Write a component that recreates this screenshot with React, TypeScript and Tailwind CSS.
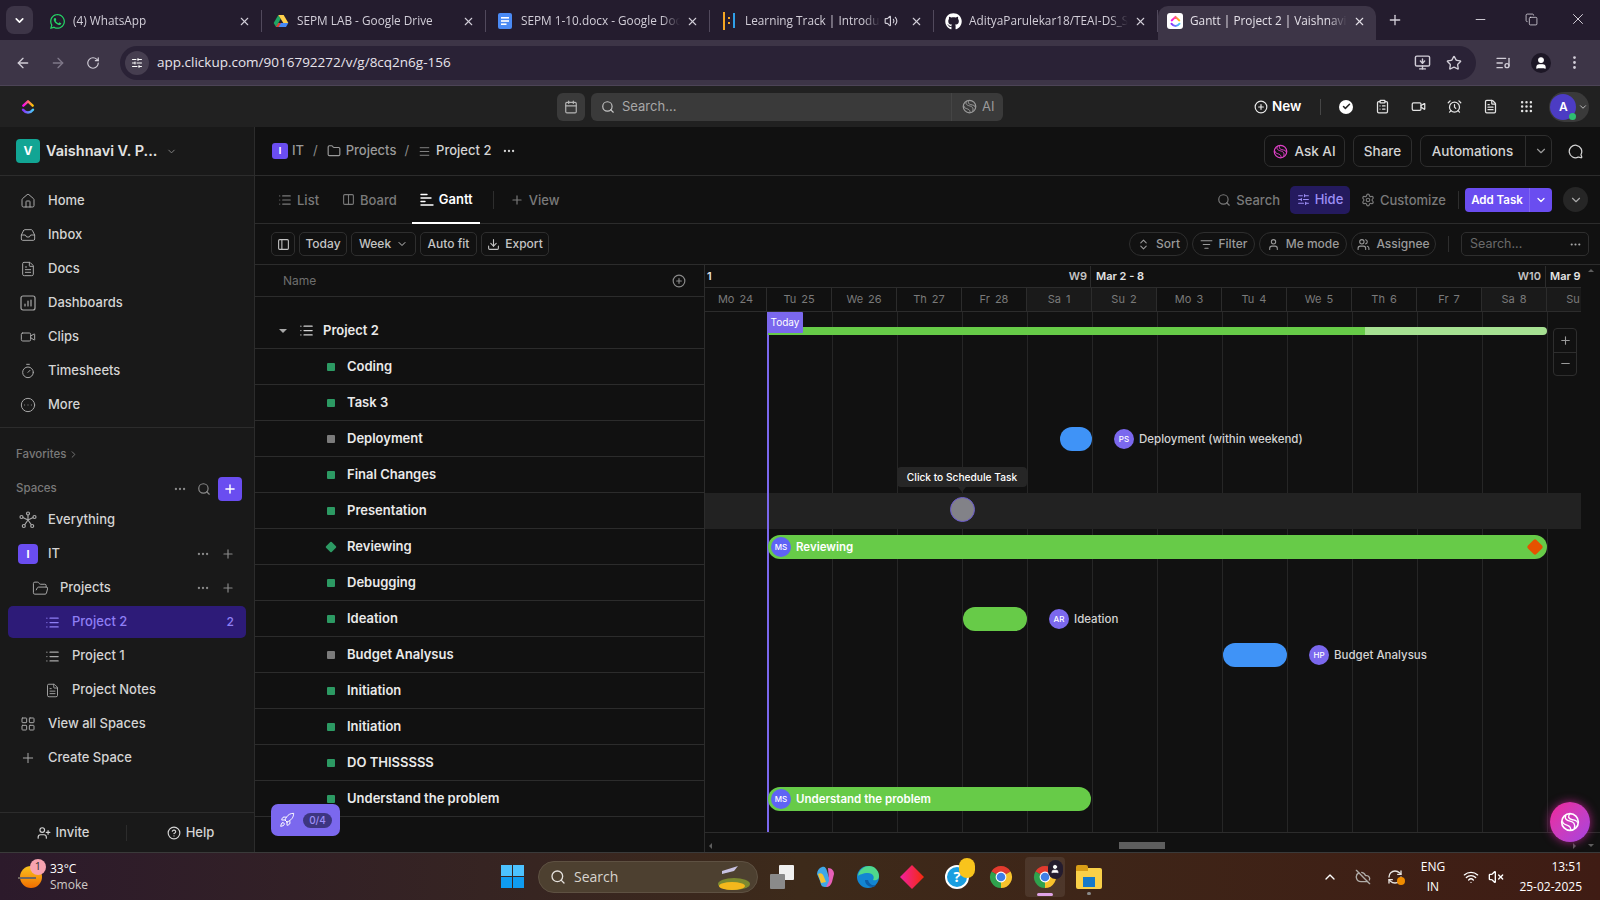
import React from 'react';
import {
  AlarmClock, ArrowLeft, ArrowRight, ChevronDown, ChevronRight, ChevronUp, ChevronsUpDown, CirclePlus, CircleEllipsis,
  CircleHelp, Check, Columns2, Copy, Download, Ellipsis, EllipsisVertical, FileText, Folder, FolderOpen, Calendar, House, Inbox,
  LayoutGrid, List, ListFilter, ListMusic, Grip, Menu, Minus, MonitorDown, Plus, RefreshCw, Rocket, RotateCw, Search, Settings, SlidersHorizontal,
  Star, Timer, User, UserPlus, Users, Video, Volume2, VolumeX, Wifi, X, CloudOff, MessageCircle, PanelLeft, ClipboardList
} from 'lucide-react';
import { FaGithub, FaWhatsapp } from 'react-icons/fa';

const ClickUpLogo = ({ size = 16 }: { size?: number }) => (
  <svg width={size} height={size} viewBox="0 0 24 24" fill="none">
    <defs>
      <linearGradient id="cu1" x1="0" y1="0" x2="1" y2="0"><stop offset="0" stopColor="#ff02f0" /><stop offset="1" stopColor="#ffc800" /></linearGradient>
      <linearGradient id="cu2" x1="0" y1="0" x2="1" y2="0"><stop offset="0" stopColor="#8930fd" /><stop offset="1" stopColor="#49ccf9" /></linearGradient>
    </defs>
    <path d="M5 10 12 3.500 19 10" stroke="url(#cu1)" strokeWidth="3.600" strokeLinecap="round" strokeLinejoin="round" />
    <path d="M4.500 16c4.500 5.800 10.500 5.800 15 0" stroke="url(#cu2)" strokeWidth="3.600" strokeLinecap="round" />
  </svg>
);

const DriveIcon = () => (
  <svg width="16" height="16" viewBox="0 0 24 24">
    <path d="M8 3 1 15l3.500 6 7-12z" fill="#1fa463" />
    <path d="M8 3h8l7 12h-7.500z" fill="#ffd04b" />
    <path d="M4.500 21h15l3.500-6H8z" fill="#4688f4" />
    <path d="M4.500 21 8 15h4l-3.500 6z" fill="#d9452f" />
  </svg>
);

const DocsIcon = () => (
  <svg width="16" height="16" viewBox="0 0 16 16">
    <rect x="1" y="0" width="14" height="16" rx="2" fill="#4a8af4" />
    <rect x="4" y="4" width="8" height="1.600" fill="#fff" />
    <rect x="4" y="7.200" width="8" height="1.600" fill="#fff" />
    <rect x="4" y="10.400" width="5.500" height="1.600" fill="#fff" />
  </svg>
);

const TrackIcon = () => (
  <svg width="12" height="18" viewBox="0 0 12 18">
    <rect x="0" y="0" width="2" height="18" fill="#f5a623" />
    <rect x="5" y="5" width="2" height="2" fill="#f5a623" />
    <rect x="5" y="10" width="2" height="2" fill="#f5a623" />
    <rect x="10" y="1" width="2" height="15" fill="#2f9fe8" />
  </svg>
);

const ChromeIcon = ({ size = 24 }: { size?: number }) => (
  <svg width={size} height={size} viewBox="0 0 24 24">
    <path d="M12 12 2.470 6.500A11 11 0 0 1 21.530 6.500Z" fill="#e33b2e" />
    <path d="M12 12 21.530 6.500A11 11 0 0 1 12 23Z" fill="#f8c22c" />
    <path d="M12 12 12 23A11 11 0 0 1 2.470 6.500Z" fill="#2fa24d" />
    <circle cx="12" cy="12" r="5.400" fill="#fff" />
    <circle cx="12" cy="12" r="4.300" fill="#3f7fe6" />
  </svg>
);

const AiSwirl = ({ size = 16, color = '#9a9a9a' }: { size?: number; color?: string }) => (
  <svg width={size} height={size} viewBox="0 0 24 24" fill="none" stroke={color} strokeWidth="2">
    <circle cx="12" cy="12" r="10" />
    <path d="M7 4c-2 4 1 6 5 7s7 3 5 9M12 2c-3 3-2 6 2 7s7 1 7 4M3 11c0 3 3 4 6 5s4 3 4 6" strokeWidth="1.600" />
  </svg>
);

const GanttGlyph = ({ color = '#fff' }: { color?: string }) => (
  <svg width="14" height="14" viewBox="0 0 14 14" stroke={color} strokeWidth="1.400" strokeLinecap="round">
    <path d="M1 2.500h6M1 6h10M1 9.500h4M1 13h12" />
  </svg>
);

const EverythingIcon = () => (
  <svg width="18" height="18" viewBox="0 0 18 18" fill="none" stroke="#a8a8a8" strokeWidth="1.200">
    <path d="M9 9V3.500M9 9 3.800 6.500M9 9l5.200-2.500M9 9l-3.500 5M9 9l3.500 5" />
    <circle cx="9" cy="2.500" r="1.500" /><circle cx="2.500" cy="6" r="1.500" /><circle cx="15.500" cy="6" r="1.500" />
    <circle cx="4.800" cy="15" r="1.500" /><circle cx="13.200" cy="15" r="1.500" />
  </svg>
);

const BoxedChart = ({ size = 16, className = '' }: { size?: number; strokeWidth?: number; className?: string }) => (
  <svg width={size} height={size} viewBox="0 0 16 16" fill="none" stroke="currentColor" strokeWidth="1.200" strokeLinecap="round" className={className}>
    <rect x="1" y="1" width="14" height="14" rx="2" />
    <path d="M5 11V9M8 11V6M11 11V5" />
  </svg>
);

const tabs = [
  { title: '(4) WhatsApp', icon: <FaWhatsapp className="text-[#25d366]" size={17} /> },
  { title: 'SEPM LAB - Google Drive', icon: <DriveIcon /> },
  { title: 'SEPM 1-10.docx - Google Docs', icon: <DocsIcon /> },
  { title: 'Learning Track | Introduction', icon: <TrackIcon />, audio: true },
  { title: 'AdityaParulekar18/TEAI-DS_SEPM', icon: <FaGithub className="text-white" size={17} /> },
];

const sideNav: [string, React.ElementType][] = [
  ['Home', House],
  ['Inbox', Inbox],
  ['Docs', FileText],
  ['Dashboards', BoxedChart],
  ['Clips', Video],
  ['Timesheets', Timer],
  ['More', CircleEllipsis],
];

const tasks = [
  { name: 'Coding', color: 'bg-[#2c9a63]' },
  { name: 'Task 3', color: 'bg-[#2c9a63]' },
  { name: 'Deployment', color: 'bg-[#7b7b7b]' },
  { name: 'Final Changes', color: 'bg-[#2c9a63]' },
  { name: 'Presentation', color: 'bg-[#2c9a63]' },
  { name: 'Reviewing', color: 'bg-[#2c9a63]', diamond: true },
  { name: 'Debugging', color: 'bg-[#2c9a63]' },
  { name: 'Ideation', color: 'bg-[#2c9a63]' },
  { name: 'Budget Analysus', color: 'bg-[#7b7b7b]' },
  { name: 'Initiation', color: 'bg-[#2c9a63]' },
  { name: 'Initiation', color: 'bg-[#2c9a63]' },
  { name: 'DO THISSSSS', color: 'bg-[#2c9a63]' },
  { name: 'Understand the problem', color: 'bg-[#2c9a63]' },
];

const days = [
  { l: 'Mo', n: '24', w: 'w-[62px]' },
  { l: 'Tu', n: '25' }, { l: 'We', n: '26' }, { l: 'Th', n: '27' }, { l: 'Fr', n: '28' },
  { l: 'Sa', n: '1', end: true }, { l: 'Su', n: '2', end: true }, { l: 'Mo', n: '3' }, { l: 'Tu', n: '4' },
  { l: 'We', n: '5' }, { l: 'Th', n: '6' }, { l: 'Fr', n: '7' }, { l: 'Sa', n: '8', end: true }, { l: 'Su', n: '9', end: true },
];

const ToolBtn = ({ children, className = '' }: { children: React.ReactNode; className?: string }) => (
  <div className={`h-[24px] flex items-center justify-center gap-[5px] border border-[#2e2e2e] rounded-[5px] text-[12px] font-medium text-[#c4c4c4] ${className}`}>{children}</div>
);

const PillBtn = ({ children, className = '' }: { children: React.ReactNode; className?: string }) => (
  <div className={`h-[24px] flex items-center justify-center gap-[6px] border border-[#2e2e2e] rounded-full text-[12px] font-medium text-[#9a9a9a] ${className}`}>{children}</div>
);

const HeadBtn = ({ children, className = '' }: { children: React.ReactNode; className?: string }) => (
  <div className={`h-[32px] flex items-center justify-center gap-[6px] border border-[#2e2e2e] rounded-[7px] text-[13.500px] font-medium text-[#d4d4d4] ${className}`}>{children}</div>
);

const Avatar = ({ text, color = 'bg-[#7b68ee]' }: { text: string; color?: string }) => (
  <div className={`w-[20px] h-[20px] rounded-full ${color} text-white text-[8px] font-medium flex items-center justify-center shrink-0`}>{text}</div>
);

const BarLabel = ({ left, top, text, label }: { left: number; top: number; text: string; label: string }) => (
  <div className="absolute flex items-center gap-[5px]" style={{ left, top }}>
    <Avatar text={text} />
    <span className="mt-[2px] text-[11.500px] font-medium text-[#d4d4d4] whitespace-nowrap">{label}</span>
  </div>
);

const App = () => {
  const colLines = [62, 127, 192, 257, 322, 387, 452, 517, 582, 647, 712, 777, 842];
  return (
    <div className="w-[1600px] h-[900px] flex flex-col overflow-hidden bg-[#111111] text-white font-['Inter',sans-serif]">
      {/* browser tabs */}
      <div className="h-[40px] shrink-0 bg-[#241c2e] flex items-end pl-[6px] font-['Open_Sans',sans-serif]">
        <div className="w-[27px] h-[28px] mb-[6px] rounded-[8px] bg-[#3d3547] flex items-center justify-center"><ChevronDown size={13} strokeWidth={3} /></div>
        <div className="flex ml-[5px] h-[34px]">
          {tabs.map((t) => (
            <div key={t.title} className="w-[224px] h-[34px] flex items-center pl-[9px] pr-[10px] pb-[4px] border-r border-[#51495c] [border-image:linear-gradient(transparent_15%,#51495c_15%,#51495c_75%,transparent_75%)_1]">
              <div className="w-[20px] flex justify-center shrink-0">{t.icon}</div>
              <span className="ml-[6px] text-[11.800px] text-[#d2ced8] whitespace-nowrap overflow-hidden flex-1 [mask-image:linear-gradient(to_right,black_88%,transparent)]">{t.title}</span>
              {t.audio && <Volume2 size={14} className="text-[#d2ced8] ml-[4px] mr-[6px] shrink-0" />}
              <X size={13} className="text-[#d2ced8] shrink-0 ml-[6px]" />
            </div>
          ))}
          <div className="w-[218px] h-[34px] bg-[#3d3547] rounded-t-[10px] flex items-center pl-[9px] pr-[10px] pb-[4px]">
            <div className="w-[16px] h-[16px] rounded-[3px] bg-white flex items-center justify-center"><ClickUpLogo size={13} /></div>
            <span className="ml-[7px] text-[11.800px] text-[#e4e0e8] whitespace-nowrap overflow-hidden flex-1 [mask-image:linear-gradient(to_right,black_88%,transparent)]">Gantt | Project 2 | Vaishnavi V. Parulekar</span>
            <X size={13} className="text-[#e4e0e8] shrink-0 ml-[6px]" />
          </div>
        </div>
        <Plus size={16} className="mb-[12px] ml-[11px] text-[#d2ced8]" />
        <div className="ml-auto flex items-center mb-[12px] text-[#e4e0e8]">
          <Minus size={15} strokeWidth={1.400} className="mr-[37px]" />
          <Copy size={13} strokeWidth={1.400} className="mr-[31px]" />
          <X size={18} strokeWidth={1.200} className="mr-[13px]" />
        </div>
      </div>
      {/* address bar */}
      <div className="h-[46px] shrink-0 bg-[#3d3547] flex items-center pl-[15px] border-b border-[#4c4456] font-['Open_Sans',sans-serif]">
        <ArrowLeft size={16} className="text-[#d2ced8]" />
        <ArrowRight size={16} className="text-[#7f7889] ml-[19px]" />
        <RotateCw size={14} className="text-[#d2ced8] ml-[20px]" />
        <div className="ml-[20px] w-[1356px] h-[34px] rounded-full bg-[#2a2236] flex items-center pl-[5px] pr-[14px]">
          <div className="w-[24px] h-[24px] rounded-full bg-[#463e50] flex items-center justify-center"><SlidersHorizontal size={12} /></div>
          <span className="ml-[8px] text-[13.500px] text-[#e8e4ec]">app.clickup.com/9016792272/v/g/8cq2n6g-156</span>
          <MonitorDown size={17} className="ml-auto text-[#d2ced8]" />
          <Star size={16} className="ml-[15px] text-[#d2ced8]" />
        </div>
        <ListMusic size={16} className="ml-[19px] text-[#d2ced8]" />
        <div className="ml-[20px] w-[20px] h-[20px] rounded-full bg-[#1d1726] flex items-center justify-center"><User size={14} fill="#fff" /></div>
        <EllipsisVertical size={17} className="ml-[15px] text-[#d2ced8]" />
      </div>
      {/* clickup top bar */}
      <div className="h-[41px] shrink-0 bg-[#212121] flex items-center pl-[20px] pr-[10px]">
        <ClickUpLogo />
        <div className="ml-[521px] w-[28px] h-[28px] rounded-[6px] bg-[#3a3a3a] flex items-center justify-center"><Calendar size={14} className="text-[#b5b5b5]" /></div>
        <div className="ml-[6px] w-[412px] h-[28px] rounded-[6px] bg-[#3a3a3a] flex items-center pl-[10px]">
          <Search size={14} className="text-[#c4c4c4]" />
          <span className="ml-[7px] text-[13px] text-[#a8a8a8]">Search...</span>
          <div className="ml-auto w-[52px] h-full border-l border-[#454545] flex items-center pl-[10px] gap-[5px] text-[13px] text-[#9a9a9a]"><AiSwirl size={15} />AI</div>
        </div>
        <CirclePlus size={14} className="ml-[251px] text-[#eaeaea]" />
        <span className="ml-[4px] text-[13.500px] font-semibold">New</span>
        <div className="ml-[19px] w-px h-[16px] bg-[#464646]" />
        <div className="ml-[18px] w-[14px] h-[14px] rounded-full bg-white flex items-center justify-center"><Check size={9} strokeWidth={4} className="text-[#222]" /></div>
        <ClipboardList size={15} className="ml-[22px] text-[#e4e4e4]" />
        <Video size={15} className="ml-[21px] text-[#e4e4e4]" />
        <AlarmClock size={15} className="ml-[21px] text-[#e4e4e4]" />
        <FileText size={15} className="ml-[21px] text-[#e4e4e4]" />
        <Grip size={15} className="ml-[21px] text-[#e4e4e4]" />
        <div className="ml-[15px] w-[40px] h-[30px] rounded-full bg-[#3a3a3a] flex items-center pl-[1px]">
          <div className="relative w-[26px] h-[26px] rounded-full bg-[#4c3cc4] flex items-center justify-center text-[12px] font-semibold">
            A<span className="absolute right-0 bottom-0 w-[7px] h-[7px] rounded-full bg-[#2fbf71]" />
          </div>
          <ChevronDown size={10} className="ml-[2px] text-[#d4d4d4]" />
        </div>
      </div>
      <div className="flex-1 flex min-h-0">
        {/* sidebar */}
        <div className="w-[255px] shrink-0 bg-[#191919] border-r border-[#2c2c2c] flex flex-col">
          <div className="h-[49px] shrink-0 border-b border-[#2c2c2c] flex items-center pl-[16px]">
            <div className="w-[24px] h-[24px] rounded-[4px] bg-[#12a594] flex items-center justify-center text-[12px] font-bold">V</div>
            <span className="ml-[6px] text-[14.500px] font-semibold text-[#e2e2e2]">Vaishnavi V. P...</span>
            <ChevronDown size={11} className="ml-[9px] text-[#8a8a8a]" />
          </div>
          <div className="h-[252px] shrink-0 border-b border-[#2c2c2c] pt-[8px]">
            {sideNav.map(([label, Icon]) => (
              <div key={label} className="h-[34px] flex items-center pl-[20px]">
                <Icon size={16} strokeWidth={1.500} className="text-[#a8a8a8]" />
                <span className="ml-[12px] text-[13px] font-medium text-[#d4d4d4]">{label}</span>
              </div>
            ))}
          </div>
          <div className="h-[25px] mt-[14px] flex items-center pl-[16px] text-[11.500px] font-medium text-[#7a7a7a]">
            Favorites <ChevronRight size={11} className="ml-[2px]" />
          </div>
          <div className="h-[26px] mt-[9px] flex items-center pl-[16px] pr-[12px] text-[11.500px] font-medium text-[#7a7a7a]">
            Spaces
            <Ellipsis size={14} className="ml-auto text-[#8a8a8a]" />
            <Search size={14} className="ml-[10px] text-[#8a8a8a]" />
            <div className="ml-[7px] w-[24px] h-[24px] rounded-[4px] bg-[#6a4df0] flex items-center justify-center"><Plus size={14} strokeWidth={2.500} className="text-white" /></div>
          </div>
          <div className="h-[34px] mt-[1px] flex items-center pl-[19px]">
            <EverythingIcon />
            <span className="ml-[11px] text-[13px] font-medium text-[#d4d4d4]">Everything</span>
          </div>
          <div className="h-[34px] flex items-center pl-[18px] pr-[19px]">
            <div className="w-[20px] h-[20px] rounded-[4px] bg-[#6a4df0] flex items-center justify-center text-[11px] font-bold">I</div>
            <span className="ml-[10px] text-[13px] font-medium text-[#d4d4d4]">IT</span>
            <Ellipsis size={14} className="ml-auto text-[#8a8a8a]" />
            <Plus size={14} className="ml-[11px] text-[#8a8a8a]" />
          </div>
          <div className="h-[34px] flex items-center pl-[32px] pr-[19px]">
            <FolderOpen size={17} strokeWidth={1.400} className="text-[#a8a8a8]" />
            <span className="ml-[11px] text-[13px] font-medium text-[#d4d4d4]">Projects</span>
            <Ellipsis size={14} className="ml-auto text-[#8a8a8a]" />
            <Plus size={14} className="ml-[11px] text-[#8a8a8a]" />
          </div>
          <div className="h-[32px] mx-[8px] my-px rounded-[5px] bg-[#2d1b78] flex items-center pl-[37px] pr-[12px] text-[#8f7ff5]">
            <List size={15} />
            <span className="ml-[12px] text-[13px] font-medium">Project 2</span>
            <span className="ml-auto text-[12px] font-medium">2</span>
          </div>
          <div className="h-[34px] flex items-center pl-[45px]">
            <List size={15} className="text-[#a8a8a8]" />
            <span className="ml-[12px] text-[13px] font-medium text-[#d4d4d4]">Project 1</span>
          </div>
          <div className="h-[34px] flex items-center pl-[45px]">
            <FileText size={15} strokeWidth={1.500} className="text-[#a8a8a8]" />
            <span className="ml-[12px] text-[13px] font-medium text-[#d4d4d4]">Project Notes</span>
          </div>
          <div className="h-[34px] flex items-center pl-[20px]">
            <LayoutGrid size={16} strokeWidth={1.500} className="text-[#a8a8a8]" />
            <span className="ml-[12px] text-[13px] font-medium text-[#d4d4d4]">View all Spaces</span>
          </div>
          <div className="h-[34px] flex items-center pl-[20px]">
            <Plus size={16} strokeWidth={1.500} className="text-[#a8a8a8]" />
            <span className="ml-[12px] text-[13px] font-medium text-[#d4d4d4]">Create Space</span>
          </div>
          <div className="mt-auto h-[40px] border-t border-[#2c2c2c] flex items-center text-[13px] font-medium text-[#d4d4d4]">
            <div className="w-[127px] flex items-center justify-center gap-[5px] border-r border-[#2c2c2c] h-[16px]"><UserPlus size={14} />Invite</div>
            <div className="flex-1 flex items-center justify-center gap-[5px]"><CircleHelp size={14} />Help</div>
          </div>
        </div>
        {/* main */}
        <div className="flex-1 flex flex-col min-w-0">
          <div className="h-[49px] shrink-0 border-b border-[#2c2c2c] flex items-center pl-[17px] pr-[17px] text-[13px]">
            <div className="w-[16px] h-[16px] rounded-[3px] bg-[#6a4df0] flex items-center justify-center text-[9px] font-bold">I</div>
            <span className="ml-[4px] text-[#9a9a9a] font-medium">IT</span>
            <span className="ml-[9px] text-[#8a8a8a]">/</span>
            <Folder size={14} className="ml-[9px] text-[#9a9a9a]" />
            <span className="ml-[5px] text-[#9a9a9a] font-medium">Projects</span>
            <span className="ml-[8px] text-[#8a8a8a]">/</span>
            <Menu size={13} strokeWidth={1.500} className="ml-[9px] text-[#9a9a9a]" />
            <span className="ml-[5px] text-[#d4d4d4] font-medium">Project 2</span>
            <Ellipsis size={14} className="ml-[11px] text-[#d4d4d4]" />
            <HeadBtn className="ml-auto w-[81px]"><AiSwirl size={15} color="#e040c8" />Ask AI</HeadBtn>
            <HeadBtn className="ml-[8px] w-[59px]">Share</HeadBtn>
            <HeadBtn className="ml-[8px] w-[132px] !gap-0">
              <span className="w-[101px] pr-[4px] text-center border-r border-[#2e2e2e] leading-[30px]">Automations</span>
              <ChevronDown size={14} className="ml-[8px] text-[#9a9a9a]" />
            </HeadBtn>
            <MessageCircle size={15} className="ml-[16px] text-[#d4d4d4] -scale-x-100" />
          </div>
          <div className="h-[48px] shrink-0 border-b border-[#2c2c2c] flex items-center pl-[23px] pr-[12px] text-[13px] font-medium">
            <List size={14} className="text-[#7a7a7a]" />
            <span className="ml-[5px] mt-[2px] text-[#7a7a7a]">List</span>
            <Columns2 size={13} className="ml-[23px] text-[#7a7a7a]" />
            <span className="ml-[5px] mt-[2px] text-[#7a7a7a]">Board</span>
            <div className="ml-[15px] w-[68px] h-[48px] border-b-2 border-white flex items-center pl-[8px]">
              <GanttGlyph />
              <span className="ml-[5px] mt-[2px] text-white font-semibold">Gantt</span>
            </div>
            <div className="ml-[13px] w-px h-[18px] bg-[#2e2e2e]" />
            <Plus size={14} className="ml-[16px] text-[#7a7a7a]" />
            <span className="ml-[5px] mt-[2px] text-[#7a7a7a]">View</span>
            <Search size={14} className="ml-auto text-[#7a7a7a]" />
            <span className="ml-[5px] mt-[2px] text-[#7a7a7a]">Search</span>
            <div className="ml-[10px] w-[60px] h-[28px] rounded-[5px] bg-[#241a5e] text-[#9d8ff7] flex items-center justify-center gap-[5px]">
              <SlidersHorizontal size={13} />Hide
            </div>
            <Settings size={14} className="ml-[11px] text-[#7a7a7a]" />
            <span className="ml-[5px] mt-[2px] text-[#7a7a7a]">Customize</span>
            <div className="ml-[12px] w-px h-[18px] bg-[#2e2e2e]" />
            <div className="ml-[6px] w-[87px] h-[24px] rounded-[4px] bg-[#6a4df0] flex items-center text-[11.500px] font-semibold">
              <span className="w-[65px] text-center border-r border-[#8068f3] leading-[24px]">Add Task</span>
              <ChevronDown size={12} strokeWidth={2.500} className="ml-[5px]" />
            </div>
            <div className="ml-[11px] w-[25px] h-[25px] rounded-full bg-[#262626] flex items-center justify-center"><ChevronDown size={14} className="text-[#a8a8a8]" /></div>
          </div>
          <div className="h-[41px] shrink-0 border-b border-[#2c2c2c] flex items-center pl-[16px] pr-[11px]">
            <ToolBtn className="w-[24px]"><PanelLeft size={13} /></ToolBtn>
            <ToolBtn className="ml-[4px] w-[48px]">Today</ToolBtn>
            <ToolBtn className="ml-[4px] w-[65px]">Week<ChevronDown size={12} /></ToolBtn>
            <ToolBtn className="ml-[4px] w-[57px]">Auto fit</ToolBtn>
            <ToolBtn className="ml-[4px] w-[68px]"><Download size={13} />Export</ToolBtn>
            <PillBtn className="ml-auto w-[59px]"><ChevronsUpDown size={13} />Sort</PillBtn>
            <PillBtn className="ml-[4px] w-[63px]"><ListFilter size={13} />Filter</PillBtn>
            <PillBtn className="ml-[4px] w-[88px]"><User size={13} />Me mode</PillBtn>
            <PillBtn className="ml-[4px] w-[85px]"><Users size={13} />Assignee</PillBtn>
            <div className="ml-[12px] w-px h-[16px] bg-[#2e2e2e]" />
            <div className="ml-[12px] w-[128px] h-[24px] rounded-[5px] border border-[#2e2e2e] flex items-center pl-[8px] pr-[6px] text-[12.500px] text-[#6a6a6a]">
              Search...<Ellipsis size={13} className="ml-auto text-[#a8a8a8]" />
            </div>
          </div>
          {/* gantt */}
          <div className="flex-1 flex min-h-0">
            <div className="relative w-[450px] shrink-0 border-r border-[#2c2c2c]">
              <div className="h-[32px] border-b border-[#2c2c2c] flex items-center pl-[28px] pr-[18px] text-[12px] text-[#6e6e6e]">
                Name
                <CirclePlus size={14} className="ml-auto text-[#8a8a8a]" />
              </div>
              <div className="h-[52px] border-b border-[#2c2c2c] pt-[16px] flex items-center pl-[24px]">
                <div className="w-0 h-0 border-x-[4px] border-x-transparent border-t-[4px] border-t-[#a8a8a8]" />
                <List size={15} className="ml-[12px] text-[#d4d4d4]" />
                <span className="ml-[9px] mt-[1px] text-[13px] font-semibold text-[#eaeaea]">Project 2</span>
              </div>
              {tasks.map((t, i) => (
                <div key={i} className="h-[36px] border-b border-[#2c2c2c] flex items-center pl-[72px]">
                  <div className={`w-[8px] h-[8px] ${t.diamond ? 'rotate-45' : ''} rounded-[1px] ${t.color}`} />
                  <span className="ml-[12px] mt-[1px] text-[13px] font-semibold text-[#eaeaea]">{t.name}</span>
                </div>
              ))}
              <div className="absolute left-[16px] top-[539px] w-[69px] h-[32px] rounded-[7px] bg-[#7b68ee] flex items-center pl-[8px]">
                <Rocket size={16} className="text-white" strokeWidth={1.500} />
                <div className="ml-[8px] w-[29px] h-[15px] rounded-full bg-[#3d3580] text-[10px] font-medium text-[#9d8ff7] flex items-center justify-center">0/4</div>
              </div>
            </div>
            <div className="relative flex-1 flex flex-col min-w-0">
              <div className="w-[876px] h-[23px] shrink-0 flex items-center pt-px text-[11px] font-semibold text-[#e4e4e4] border-b border-[#2c2c2c]">
                <div className="w-[386px] h-full flex items-center pl-[2px] border-r border-[#2c2c2c]">
                  1<span className="ml-auto mr-[3px] text-[#c4c4c4]">W9</span>
                </div>
                <div className="w-[455px] h-full flex items-center pl-[5px] border-r border-[#2c2c2c]">
                  Mar 2 - 8<span className="ml-auto mr-[4px] text-[#c4c4c4]">W10</span>
                </div>
                <div className="pl-[4px]">Mar 9</div>
              </div>
              <div className="w-[876px] h-[24px] shrink-0 flex border-b border-[#2c2c2c] text-[11px] text-[#7a7a7a] overflow-hidden">
                {days.map((d, i) => (
                  <div key={i} className={`${d.w || 'w-[65px]'} shrink-0 h-full flex items-center justify-center gap-[5px] border-r border-[#2c2c2c] ${d.end ? 'bg-[#1a1a1a]' : ''}`}>
                    <span>{d.l}</span><span>{d.n}</span>
                  </div>
                ))}
              </div>
              {/* chart canvas, bars sit on dates */}
              <div className="relative h-[521px] shrink-0 border-b border-[#2c2c2c] overflow-hidden">
                {colLines.map((x) => (
                  <div key={x} className="absolute top-0 bottom-0 w-px bg-[#262626]" style={{ left: x - 0.5 }} />
                ))}
                <div className="absolute left-0 w-[876px] top-[181px] h-[36px] bg-[#222222]" />
                <div className="absolute left-[62px] top-0 bottom-0 w-[2px] bg-[#7b68ee]" />
                <div className="absolute left-[62px] top-0 w-[36px] h-[21px] bg-[#7b68ee] rounded-[1px] text-[10px] text-white flex items-center justify-center z-10">Today</div>
                <div className="absolute left-[63px] top-[15px] w-[597px] h-[8px] bg-[#67cb48]" />
                <div className="absolute left-[660px] top-[15px] w-[182px] h-[8px] bg-[#a6e092] rounded-r-full" />
                <div className="absolute left-[355px] top-[115px] w-[32px] h-[24px] rounded-[12px] bg-[#3f93f7]" />
                <BarLabel left={409} top={117} text="PS" label="Deployment (within weekend)" />
                <div className="absolute left-[192px] top-[155px] w-[130px] h-[20px] pt-[2px] rounded-[4px] bg-[#262626] text-[10.200px] font-medium text-white flex items-center justify-center">Click to Schedule Task</div>
                <div className="absolute left-[253px] top-[175px] w-0 h-0 border-x-[4px] border-x-transparent border-t-[5px] border-t-[#262626]" />
                <div className="absolute left-[245px] top-[185px] w-[25px] h-[25px] rounded-full bg-[#828288] border border-[#6a5acd]" />
                <div className="absolute left-[63px] top-[223px] w-[779px] h-[24px] rounded-[12px] bg-[#67cb48] flex items-center pl-[3px]">
                  <Avatar text="MS" color="bg-[#5f63f5]" />
                  <span className="ml-[5px] mt-[2px] text-[11.500px] font-semibold text-white">Reviewing</span>
                  <div className="ml-auto mr-[6px] w-[12px] h-[12px] rotate-45 rounded-[2px] bg-[#e65100]" />
                </div>
                <div className="absolute left-[258px] top-[295px] w-[64px] h-[24px] rounded-[12px] bg-[#67cb48]" />
                <BarLabel left={344} top={297} text="AR" label="Ideation" />
                <div className="absolute left-[518px] top-[331px] w-[64px] h-[24px] rounded-[12px] bg-[#3f93f7]" />
                <BarLabel left={604} top={333} text="HP" label="Budget Analysus" />
                <div className="absolute left-[63px] top-[475px] w-[323px] h-[24px] rounded-[12px] bg-[#67cb48] flex items-center pl-[3px]">
                  <Avatar text="MS" color="bg-[#5f63f5]" />
                  <span className="ml-[5px] mt-[2px] text-[11.500px] font-semibold text-white">Understand the problem</span>
                </div>
                <div className="absolute left-[848px] top-[16px] w-[24px] h-[48px] rounded-[4px] border border-[#2e2e2e] bg-[#111111] flex flex-col items-center text-[#9a9a9a]">
                  <div className="h-[24px] w-full flex items-center justify-center border-b border-[#2e2e2e]"><Plus size={13} /></div>
                  <div className="h-[23px] flex items-center justify-center"><Minus size={13} /></div>
                </div>
              </div>
              <div className="relative flex-1 flex items-center">
                <div className="ml-[414px] mt-[6px] w-[46px] h-[7px] bg-[#5e5e5e]" />
                <div className="absolute left-[4px] top-[10px] w-0 h-0 border-y-[3px] border-y-transparent border-r-[3px] border-r-[#5e5e5e]" />
                <div className="absolute right-[24px] top-[10px] w-0 h-0 border-y-[3px] border-y-transparent border-l-[3px] border-l-[#5e5e5e]" />
                <div className="absolute right-[6px] top-[11px] w-0 h-0 border-x-[3px] border-x-transparent border-t-[3px] border-t-[#5e5e5e]" />
                <div className="absolute right-[10px] -top-[31px] w-[40px] h-[40px] rounded-full bg-gradient-to-br from-[#f0209a] to-[#a640e0] shadow-[0_0_10px_#a0207a] flex items-center justify-center">
                  <AiSwirl size={20} color="#ffffff" />
                </div>
              </div>
              <div className="absolute right-[6px] top-[4px] w-0 h-0 border-x-[3px] border-x-transparent border-b-[3px] border-b-[#5e5e5e]" />
            </div>
          </div>
        </div>
      </div>
      {/* windows taskbar */}
      <div className="h-[48px] shrink-0 bg-gradient-to-r from-[#2c1a2b] via-[#3d2a1a] to-[#3f1c14] border-t border-[#3a3a3a] flex items-center font-['Open_Sans',sans-serif]">
        <div className="relative ml-[20px] w-[22px] h-[22px] rounded-full bg-gradient-to-b from-[#f7c21d] to-[#ef6c00]">
          <div className="absolute left-[-2px] top-[11px] w-[18px] h-[2px] bg-[#6e6660]" />
          <div className="absolute left-[10px] -top-[7px] w-[16px] h-[16px] rounded-full bg-[#f8a3b0] text-[11px] text-[#333] flex items-center justify-center">1</div>
        </div>
        <div className="ml-[8px] leading-[16px]">
          <div className="text-[12px] text-white">33°C</div>
          <div className="text-[12px] text-[#cfc9c6]">Smoke</div>
        </div>
        <div className="ml-[413px] grid grid-cols-2 gap-[1px] w-[23px] h-[23px]">
          <div className="bg-[#4cc2ff]" /><div className="bg-[#4cc2ff]" /><div className="bg-[#0f9bf0]" /><div className="bg-[#0f9bf0]" />
        </div>
        <div className="ml-[14px] w-[220px] h-[32px] rounded-full bg-[#4d4030] border border-[#5e5142] flex items-center pl-[11px] pr-[5px]">
          <Search size={16} className="text-[#e4e0dc]" />
          <span className="ml-[8px] text-[14px] text-[#d8d4cf]">Search</span>
          <svg className="ml-auto" width="48" height="28" viewBox="0 0 48 28">
            <path d="M18 8 34 3l-4 5-12 3z" fill="#c9c2e2" />
            <ellipse cx="30" cy="21" rx="16" ry="6" fill="#7c8a30" />
            <ellipse cx="28" cy="23" rx="13" ry="4" fill="#f4b81c" />
          </svg>
        </div>
        <div className="ml-[12px] w-[24px] h-[24px] relative">
          <div className="absolute right-0 top-0 w-[15px] h-[15px] bg-[#f0f0f0] rounded-[1px]" />
          <div className="absolute left-0 bottom-0 w-[15px] h-[15px] bg-[#8a8a8a] rounded-[1px]" />
        </div>
        <svg className="ml-[19px]" width="24" height="24" viewBox="0 0 24 24">
          <path d="M9 2c3-1 4 1 5 4l3 10c1 4-2 6-5 6-4 0-4-3-5-6L4 9c0-3 2-6 5-7z" fill="#3fa8e8" />
          <path d="M15 3c4 0 6 3 6 6l-2 8c-1 3-3 5-6 5l3-6z" fill="#e860b8" />
          <path d="M5 9c3-2 5 0 6 3l2 5-5 1z" fill="#f3c233" />
        </svg>
        <svg className="ml-[19px]" width="24" height="24" viewBox="0 0 24 24">
          <circle cx="12" cy="12" r="11" fill="#1386d2" />
          <path d="M2 11C3 4 9 1 13 1c6 0 10 5 10 10 0 4-4 5-6 4 2-3 0-7-5-7-5 0-9 2-10 3z" fill="#4fd88c" />
          <path d="M9 15c0 4 3 7 8 7 1 0 2-1 3-2-4 1-7-1-8-5z" fill="#0c5ea8" />
        </svg>
        <svg className="ml-[20px]" width="24" height="24" viewBox="0 0 24 24">
          <defs><linearGradient id="rd" x1="0" y1="0" x2="1" y2="0"><stop offset="0" stopColor="#f020a0" /><stop offset="1" stopColor="#f52a0a" /></linearGradient></defs>
          <path d="M12 0 24 12 12 24 0 12z" fill="url(#rd)" />
        </svg>
        <div className="relative ml-[21px] w-[24px] h-[24px] rounded-full bg-[#1a9ee0] border-2 border-white flex items-center justify-center text-[15px] font-bold text-white">
          ?
          <span className="absolute -right-[8px] -top-[9px] w-[16px] h-[20px] rounded-full bg-[#f8c41c]" />
        </div>
        <div className="ml-[20px]"><ChromeIcon /></div>
        <div className="ml-[12px] w-[40px] h-[40px] rounded-[4px] bg-[#ffffff14] relative flex items-center justify-center">
          <ChromeIcon />
          <div className="absolute right-[2px] top-[3px] w-[15px] h-[19px] rounded-full bg-[#241c2e] flex items-center justify-center"><User size={10} fill="#fff" /></div>
          <div className="absolute bottom-[1px] w-[16px] h-[3px] rounded-full bg-[#dfa3e6]" />
        </div>
        <div className="relative ml-[11px] w-[26px] h-[24px]">
          <div className="absolute inset-x-0 top-[3px] bottom-0 rounded-[2px] bg-[#f9d048]" />
          <div className="absolute left-0 top-0 w-[12px] h-[6px] rounded-t-[2px] bg-[#d99e16]" />
          <div className="absolute left-[7px] bottom-[2px] w-[12px] h-[10px] bg-[#1479c9]" />
          <div className="absolute left-[11px] -bottom-[6px] w-[4px] h-[3px] rounded-full bg-[#8a8a8a]" />
        </div>
        <ChevronUp size={16} className="ml-[220px] text-white" />
        <CloudOff size={16} className="ml-[17px] text-[#b0aca8]" />
        <div className="relative ml-[16px]">
          <RefreshCw size={16} className="text-[#e8e4e0]" />
          <span className="absolute right-[-2px] bottom-0 w-[8px] h-[8px] rounded-full bg-[#f08c00]" />
        </div>
        <div className="ml-[15px] w-[30px] text-center text-[12px] leading-[20px] text-white">ENG<br />IN</div>
        <Wifi size={16} className="ml-[15px] text-white" />
        <VolumeX size={16} className="ml-[9px] text-white" />
        <div className="ml-auto mr-[18px] text-right text-[12px] leading-[20px] text-white">13:51<br />25-02-2025</div>
      </div>
    </div>
  );
};

export default App;
